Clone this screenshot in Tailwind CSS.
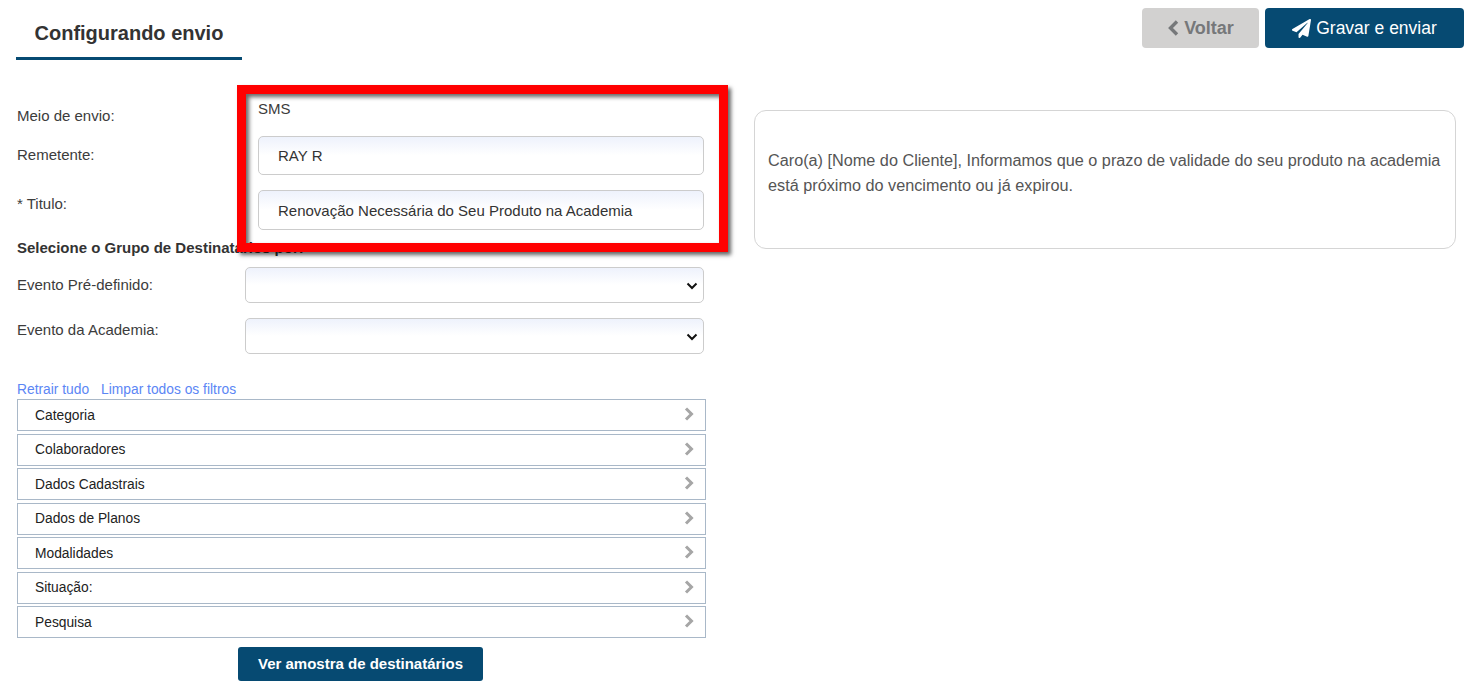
<!DOCTYPE html>
<html lang="en">
<head>
    <meta charset="UTF-8">
    <title>Configurando envio</title>
    <script src="https://cdn.jsdelivr.net/npm/@tailwindcss/browser@4"></script>
</head>
<body class="bg-white font-['Liberation_Sans',Arial,sans-serif] text-[#3c3c3c] text-[15px] leading-[20px] overflow-hidden">
    <div class="relative w-[1479px] h-[692px] overflow-hidden">
        <!-- header -->
        <div class="flex justify-between pl-[16px] pr-[15px] pt-[8px]">
            <div class="w-[226px] h-[52px] border-b-[3px] border-[#064a72] pl-[18.500px] pt-[14px] text-[20px] leading-[23px] font-bold text-[#333]">Configurando envio</div>
            <div class="flex gap-[6px]">
                <button class="w-[117px] h-[40px] rounded-[4px] bg-[#d2d1d0] text-[#76787a] text-[18px] font-bold flex items-center justify-center gap-[5px]">
                    <svg width="12" height="16" viewBox="0 0 12 16"><path d="M10 1.500 3.500 8l6.500 6.500" fill="none" stroke="#76787a" stroke-width="3.400"/></svg>
                    Voltar
                </button>
                <button class="w-[199px] h-[40px] rounded-[4px] bg-[#064a72] text-white text-[17.500px] flex items-center justify-center gap-[5px]">
                    <svg width="19" height="19" viewBox="0 0 512 512"><path fill="#fff" d="M476 3 12 271c-18 10-16 35 3 43l106 44 287-253c6-5 13 3 9 8L176 405v82c0 24 29 33 43 16l64-78 125 52c14 6 31-3 33-18L512 27c4-20-18-34-36-24z"/></svg>
                    Gravar e enviar
                </button>
            </div>
        </div>

        <div class="flex pl-[17px] pt-[46px]">
            <!-- form column -->
            <div class="w-[689px]">
                <div class="flex h-[30px]"><span class="w-[241px]">Meio de envio:</span><span class="-mt-[7px]">SMS</span></div>
                <div class="flex h-[54px]"><label class="w-[241px] pt-[9px]">Remetente:</label>
                    <input value="RAY R" class="w-[446px] h-[39px] rounded-[5px] border border-[#ccc] px-[19px] bg-gradient-to-b from-[#eef2fc] to-white to-50% text-[#333]"></div>
                <div class="flex h-[48px]"><label class="w-[241px] pt-[4px]">* Titulo:</label>
                    <input value="Renovação Necessária do Seu Produto na Academia" class="w-[446px] h-[40px] rounded-[5px] border border-[#ccc] px-[19px] bg-gradient-to-b from-[#eef2fc] to-white to-50% text-[#333]"></div>
                <div class="font-bold h-[20px] mb-[9px] text-[#333]">Selecione o Grupo de Destinatários por:</div>
                <div class="flex h-[51px]"><label class="w-[228px] pt-[8px]">Evento Pré-definido:</label>
                    <div class="relative w-[459px] h-[36px]">
                        <select class="appearance-none w-full h-full rounded-[5px] border border-[#ccc] bg-gradient-to-b from-[#eef2fc] to-white to-50%"></select>
                        <svg class="absolute right-[6px] top-[15px] pointer-events-none" width="12" height="8" viewBox="0 0 12 8"><path d="M1.500 1.500 6 6l4.500-4.500" fill="none" stroke="#111" stroke-width="2"/></svg>
                    </div></div>
                <div class="flex h-[62px]"><label class="w-[228px] pt-[2px]">Evento da Academia:</label>
                    <div class="relative w-[459px] h-[36px]">
                        <select class="appearance-none w-full h-full rounded-[5px] border border-[#ccc] bg-gradient-to-b from-[#eef2fc] to-white to-50%"></select>
                        <svg class="absolute right-[6px] top-[15px] pointer-events-none" width="12" height="8" viewBox="0 0 12 8"><path d="M1.500 1.500 6 6l4.500-4.500" fill="none" stroke="#111" stroke-width="2"/></svg>
                    </div></div>
                <div class="flex gap-[12px] h-[19px] leading-[19px] text-[13.800px] text-[#5b86f5]"><a>Retrair tudo</a><a>Limpar todos os filtros</a></div>
                <div class="flex flex-col gap-[2.500px] text-[#222] text-[13.800px]">
                    <div class="flex items-center justify-between h-[32px] border border-[#a9b8c8] pl-[17px] pr-[11px] pt-[1px]">Categoria<svg class="mb-[3px]" width="10" height="14" viewBox="0 0 10 14"><path d="M2 1.500 7.500 7 2 12.500" fill="none" stroke="#a6a6a6" stroke-width="3"/></svg></div>
                    <div class="flex items-center justify-between h-[32px] border border-[#a9b8c8] pl-[17px] pr-[11px] pt-[1px]">Colaboradores<svg class="mb-[3px]" width="10" height="14" viewBox="0 0 10 14"><path d="M2 1.500 7.500 7 2 12.500" fill="none" stroke="#a6a6a6" stroke-width="3"/></svg></div>
                    <div class="flex items-center justify-between h-[32px] border border-[#a9b8c8] pl-[17px] pr-[11px] pt-[1px]">Dados Cadastrais<svg class="mb-[3px]" width="10" height="14" viewBox="0 0 10 14"><path d="M2 1.500 7.500 7 2 12.500" fill="none" stroke="#a6a6a6" stroke-width="3"/></svg></div>
                    <div class="flex items-center justify-between h-[32px] border border-[#a9b8c8] pl-[17px] pr-[11px] pt-[1px]">Dados de Planos<svg class="mb-[3px]" width="10" height="14" viewBox="0 0 10 14"><path d="M2 1.500 7.500 7 2 12.500" fill="none" stroke="#a6a6a6" stroke-width="3"/></svg></div>
                    <div class="flex items-center justify-between h-[32px] border border-[#a9b8c8] pl-[17px] pr-[11px] pt-[1px]">Modalidades<svg class="mb-[3px]" width="10" height="14" viewBox="0 0 10 14"><path d="M2 1.500 7.500 7 2 12.500" fill="none" stroke="#a6a6a6" stroke-width="3"/></svg></div>
                    <div class="flex items-center justify-between h-[32px] border border-[#a9b8c8] pl-[17px] pr-[11px] pt-[1px]">Situação:<svg class="mb-[3px]" width="10" height="14" viewBox="0 0 10 14"><path d="M2 1.500 7.500 7 2 12.500" fill="none" stroke="#a6a6a6" stroke-width="3"/></svg></div>
                    <div class="flex items-center justify-between h-[32px] border border-[#a9b8c8] pl-[17px] pr-[11px] pt-[1px]">Pesquisa<svg class="mb-[3px]" width="10" height="14" viewBox="0 0 10 14"><path d="M2 1.500 7.500 7 2 12.500" fill="none" stroke="#a6a6a6" stroke-width="3"/></svg></div>
                </div>
                <div class="flex justify-center mt-[9px] pr-[2px]">
                    <button class="w-[245px] h-[34px] rounded-[3px] bg-[#064a72] text-white font-bold">Ver amostra de destinatários</button>
                </div>
            </div>
            <!-- message preview -->
            <div class="ml-[48px] mt-[4px] w-[702px] h-[139px] border border-[#d5d5d5] rounded-[12px] px-[13px] pt-[37px] text-[#555] text-[16.240px] leading-[25px]">
                Caro(a) [Nome do Cliente], Informamos que o prazo de validade do seu produto na academia está próximo do vencimento ou já expirou.
            </div>
        </div>

        <!-- highlight overlay -->
        <div class="absolute left-[237px] top-[85px] w-[491px] h-[167px] border-[9px] border-[#ff0000] shadow-[3px_3px_4px_rgba(0,0,0,0.6),inset_3px_3px_4px_rgba(0,0,0,0.6)] pointer-events-none"></div>
    </div>
</body>
</html>
